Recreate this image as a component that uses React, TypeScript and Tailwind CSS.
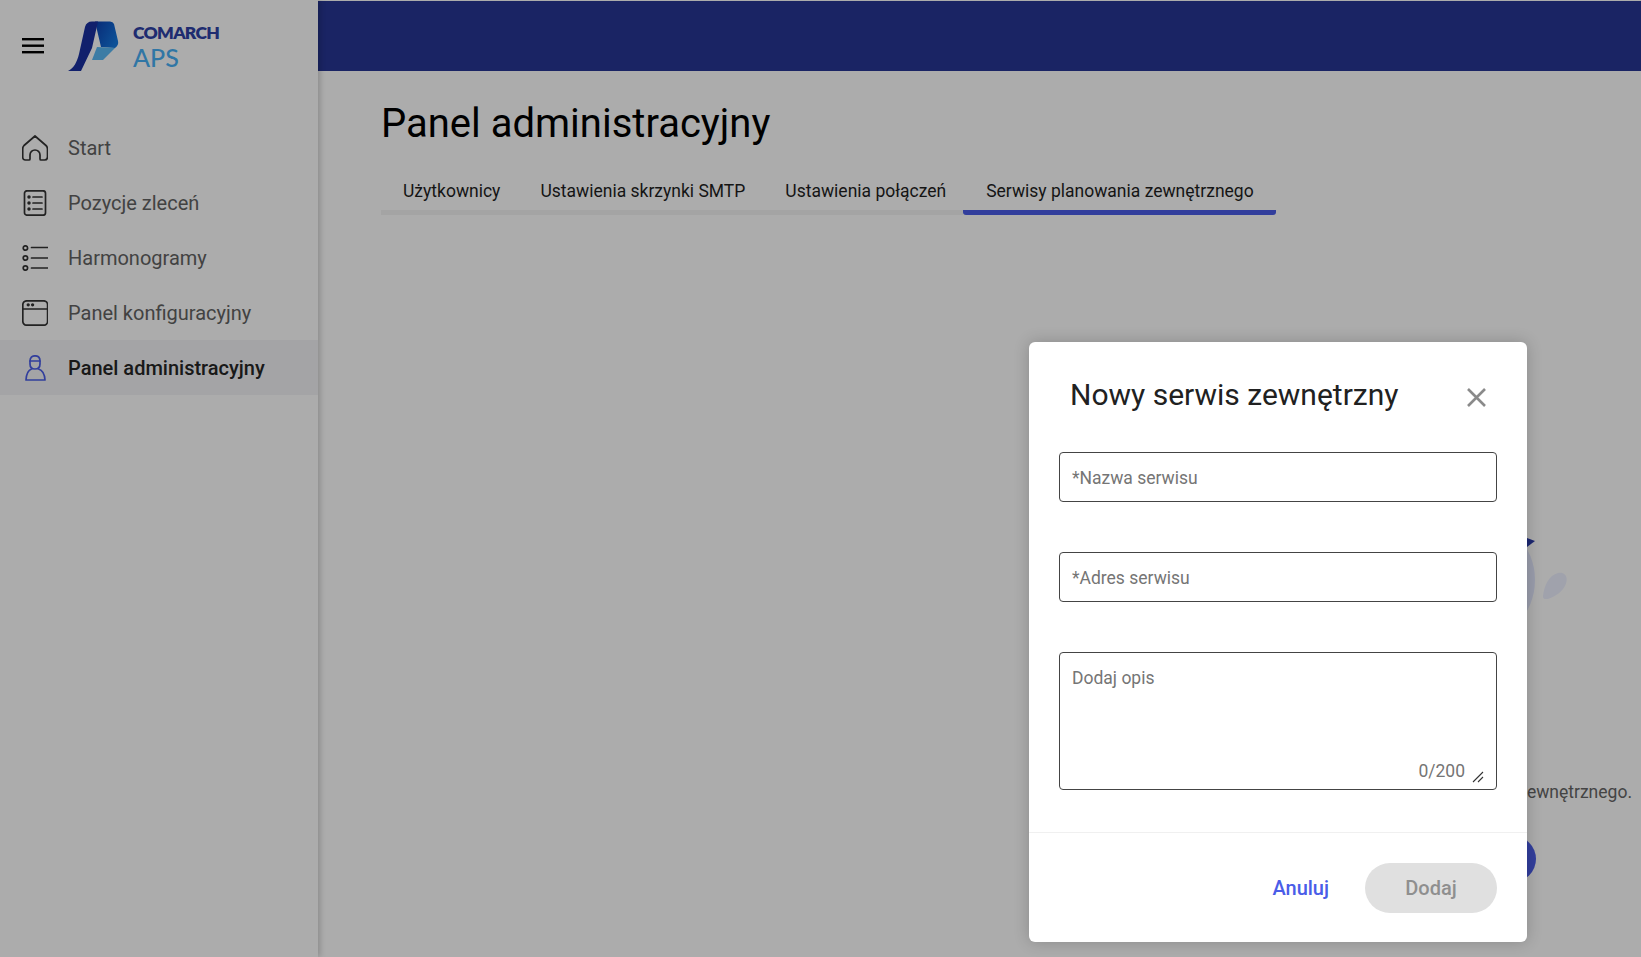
import { ReactNode } from 'react';

const navItems: { label: string; icon: ReactNode; active?: boolean }[] = [
  {
    label: 'Start',
    icon: <path d="M13 1 L24 10.5 Q25.5 11.8 25.5 14 V22 Q25.5 25 22.5 25 H19 Q18 25 18 24 V20 A5 5 0 0 0 8 20 V24 Q8 25 7 25 H3.5 Q0.7 25 0.7 22 V14 Q0.7 11.8 2 10.5 Z" />,
  },
  {
    label: 'Pozycje zleceń',
    icon: (
      <>
        <rect x="2.5" y="0.8" width="21" height="24.4" rx="2.5" />
        <circle cx="7" cy="7" r="0.9" fill="currentColor" />
        <circle cx="7" cy="13" r="0.9" fill="currentColor" />
        <circle cx="7" cy="19" r="0.9" fill="currentColor" />
        <path d="M11 7 H20 M11 13 H20 M11 19 H20" />
      </>
    ),
  },
  {
    label: 'Harmonogramy',
    icon: (
      <>
        <circle cx="3.4" cy="3" r="2.2" />
        <circle cx="3.4" cy="13" r="2.2" />
        <circle cx="3.4" cy="23" r="2.2" />
        <path d="M9.5 2.5 H26 M9.5 13 H26 M9.5 23 H26" />
      </>
    ),
  },
  {
    label: 'Panel konfiguracyjny',
    icon: (
      <>
        <rect x="0.8" y="0.8" width="24.8" height="24.4" rx="4" />
        <path d="M0.8 9 H25.6" />
        <circle cx="6.2" cy="4.8" r="0.8" fill="currentColor" />
        <circle cx="10.6" cy="4.8" r="0.8" fill="currentColor" />
      </>
    ),
  },
  {
    label: 'Panel administracyjny',
    active: true,
    icon: (
      <>
        <path d="M8 6 C8 2.5 10 0.8 13 0.8 C16 0.8 18 2.5 18 6 V9 C18 12 16 14 13 14 C10 14 8 12 8 9 Z" />
        <path d="M8 6 H18" />
        <path d="M9.5 14 C6.5 15 4.5 17.5 4 25 H23 C22.5 17.5 20 15 16.5 14" />
      </>
    ),
  },
];

const tabs = [
  { label: 'Użytkownicy', cls: 'border-[#f3f3f3] pl-[22px] pr-[20px]' },
  { label: 'Ustawienia skrzynki SMTP', cls: 'border-[#f3f3f3] px-[20px]' },
  { label: 'Ustawienia połączeń', cls: 'border-[#f3f3f3] pl-[20px] pr-[17px]' },
  { label: 'Serwisy planowania zewnętrznego', cls: 'rounded-[3px] border-[#4a5de8] pl-[23px] pr-[22px]' },
];

function Logo() {
  return (
    <svg width="52" height="52" viewBox="0 0 52 52" className="shrink-0">
      <defs>
        <linearGradient id="logoMid" x1="0" y1="0" x2="1" y2="0.6">
          <stop offset="0" stopColor="#0c3fb0" />
          <stop offset="1" stopColor="#1478e0" />
        </linearGradient>
      </defs>
      <path d="M27 0.5 H42 Q45 0.5 46 3 L50 20 Q51 24 47 27 L33 26 Z" fill="url(#logoMid)" />
      <path d="M0 50 C6 47 9 41 11 33 L17 6 Q18.5 0.5 24 0.5 H30 L24 27 L13 50 Z" fill="#1a30a0" />
      <path d="M29 26 L47 27 L35 39 H24 Z" fill="#5ab8f5" />
    </svg>
  );
}

export default function App() {
  return (
    <div className="relative flex h-[957px] w-[1641px] overflow-hidden bg-white font-['Roboto',sans-serif]">
      {/* Sidebar */}
      <aside className="z-10 flex w-[318px] shrink-0 flex-col bg-white shadow-[2px_0_6px_rgba(0,0,0,0.2)]">
        <div className="flex h-[120px] items-start pl-[22px] pt-[21px]">
          <svg width="22" height="16" viewBox="0 0 22 16" className="mt-[17px]" fill="#000">
            <rect y="0" width="22" height="2.4" />
            <rect y="6.5" width="22" height="2.4" />
            <rect y="13" width="22" height="2.4" />
          </svg>
          <div className="ml-[24px]">
            <Logo />
          </div>
          <div className="ml-[13px] flex flex-col pt-[1px]">
            <span className="font-['Lato',sans-serif] text-[17.5px] leading-[22px] font-extrabold tracking-[-0.7px] text-[#2e42a7]">COMARCH</span>
            <span className="font-['Lato',sans-serif] text-[25px] leading-[26px] font-medium text-[#48b0f5]">APS</span>
          </div>
        </div>
        <nav className="flex flex-col">
          {navItems.map((item) => (
            <div
              key={item.label}
              className={
                item.active
                  ? 'flex h-[55px] items-center gap-[20px] bg-[#f3f4f6] pl-[22px] text-[20px] font-medium text-[#262626]'
                  : 'flex h-[55px] items-center gap-[20px] pl-[22px] text-[20px] text-[#636363]'
              }
            >
              <svg
                width="26"
                height="26"
                viewBox="0 0 26 26"
                fill="none"
                stroke="currentColor"
                strokeWidth="1.7"
                strokeLinecap="round"
                strokeLinejoin="round"
                className={item.active ? 'text-[#4a5de8]' : 'text-[#333333]'}
              >
                {item.icon}
              </svg>
              <span>{item.label}</span>
            </div>
          ))}
        </nav>
      </aside>

      {/* Main */}
      <main className="flex min-w-0 flex-1 flex-col">
        <div className="mt-px h-[70px] shrink-0 bg-[#273694]" />
        <div className="flex flex-col pl-[63px] pr-[9px]">
          <h1 className="mt-[29px] text-[40px] leading-[48px] font-normal text-black">Panel administracyjny</h1>
          <div className="mt-[24px] flex w-[895px]">
            {tabs.map((tab) => (
              <div
                key={tab.label}
                className={`h-[43px] whitespace-nowrap border-b-[5px] pt-[7px] text-[17.5px] leading-[24px] text-[#1f1f1f] ${tab.cls}`}
              >
                {tab.label}
              </div>
            ))}
          </div>

          {/* Empty state behind the dialog */}
          <div className="mt-[323px] flex flex-col items-end">
            <svg width="120" height="80" viewBox="0 0 120 80" className="mr-[62px]">
              <ellipse cx="25" cy="42" rx="60" ry="62" fill="#e4e9ff" />
              <path d="M77 0 L85 3 L77 9 Z" fill="#2a3aa8" />
              <path d="M108 35 C118 33 119 44 113 51 C107 59 92 65 93 58 C94 48 99 37 108 35 Z" fill="#eef1ff" />
            </svg>
            <p className="mt-[162px] whitespace-nowrap text-[17.5px] leading-[24px] text-[#666666]">
              Brak zdefiniowanych serwisów planowania zewnętrznego.
            </p>
            <button className="mr-[96px] mt-[32px] h-[46px] w-[200px] rounded-full bg-[#4a5de8] text-[18px] text-white">Dodaj serwis</button>
          </div>
        </div>
      </main>

      {/* Dialog */}
      <div className="absolute inset-0 z-20 flex items-start justify-end bg-black/[0.325] pr-[114px] pt-[342px]">
        <div className="flex h-[600px] w-[498px] flex-col rounded-[6px] bg-white shadow-[0_0_16px_rgba(0,0,0,0.2)]">
          <div className="flex h-[110px] items-start justify-between pl-[41px] pr-[41px] pt-[33px]">
            <h2 className="text-[30px] leading-[40px] font-normal text-[#212121]">Nowy serwis zewnętrzny</h2>
            <svg width="19" height="19" viewBox="0 0 19 19" stroke="#8a8a8a" strokeWidth="2.6" className="mt-[13px]">
              <path d="M1 1 L18 18 M18 1 L1 18" />
            </svg>
          </div>
          <div className="flex flex-col gap-[50px] pl-[30px] pr-[30px]">
            <input
              placeholder="*Nazwa serwisu"
              className="h-[50px] rounded-[4px] border border-[#444444] px-[12px] pt-[2px] text-[17.5px] outline-none placeholder:text-[#757575]"
            />
            <input
              placeholder="*Adres serwisu"
              className="h-[50px] rounded-[4px] border border-[#444444] px-[12px] pt-[2px] text-[17.5px] outline-none placeholder:text-[#757575]"
            />
            <div className="relative h-[138px] rounded-[4px] border border-[#444444] pb-[7px] pl-[12px] pr-[11px] pt-[13px]">
              <textarea
                placeholder="Dodaj opis"
                className="block h-full w-full resize-none text-[17.5px] leading-[24px] outline-none placeholder:text-[#757575]"
              />
              <span className="absolute bottom-[6px] right-[31px] text-[17.5px] leading-[24px] text-[#757575]">0/200</span>
              <svg width="12" height="12" viewBox="0 0 12 12" stroke="#333333" strokeWidth="1.1" className="absolute bottom-[6px] right-[12px]">
                <path d="M1 11 L11 1 M6 11 L11 6" />
              </svg>
            </div>
          </div>
          <div className="mt-[42px] flex flex-1 items-start justify-end gap-[36px] border-t border-[#f0f0f0] pr-[30px] pt-[30px]">
            <button className="h-[50px] text-[20px] font-medium text-[#4a5de8]">Anuluj</button>
            <button className="h-[50px] w-[132px] rounded-full bg-[#e0e0e0] text-[20px] font-medium text-[#8f8f8f]">Dodaj</button>
          </div>
        </div>
      </div>
    </div>
  );
}
